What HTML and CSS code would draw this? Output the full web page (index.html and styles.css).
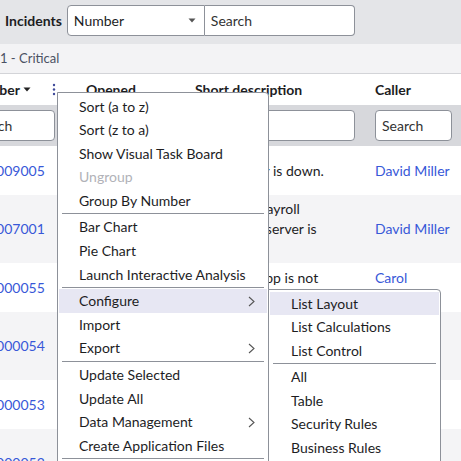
FILE: index.html
```html
<!DOCTYPE html>
<html lang="en">
<head>
<meta charset="utf-8">
<title>Incidents</title>
<link rel="stylesheet" href="styles.css">
</head>
<body>
<div class="page">
  <header class="topbar">
    <span class="title">Incidents</span>
    <div class="searchgroup">
      <div class="select"><span>Number</span><svg class="caret" width="8" height="5" viewBox="0 0 8 5"><path d="M0.5 0.5h7L4 4.5z" fill="#555"/></svg></div>
      <div class="search">Search</div>
    </div>
  </header>
  <div class="group">1 - Critical</div>
  <div class="list">
    <div class="row head">
      <div class="cell c1"><span>Number</span><svg class="sortcaret" width="8" height="5" viewBox="0 0 8 5"><path d="M0.5 0.5h7L4 4.5z" fill="#222"/></svg><svg class="dots" width="4" height="13" viewBox="0 0 4 13"><circle cx="2" cy="2" r="1.2" fill="#3f4a9a"/><circle cx="2" cy="6.5" r="1.2" fill="#3f4a9a"/><circle cx="2" cy="11" r="1.2" fill="#3f4a9a"/></svg></div>
      <div class="cell c2">Opened</div>
      <div class="cell c3">Short description</div>
      <div class="cell c4">Caller</div>
    </div>
    <div class="row filters">
      <div class="cell c1"><div class="input">Search</div></div>
      <div class="cell c2"><div class="input">Search</div></div>
      <div class="cell c3"><div class="input">Search</div></div>
      <div class="cell c4"><div class="input w77">Search</div></div>
    </div>
    <div class="row h2">
      <div class="cell c1 link">INC0009005</div>
      <div class="cell c2">2025-05-14 10:22:31</div>
      <div class="cell c3">Email server is down.</div>
      <div class="cell c4 link">David Miller</div>
    </div>
    <div class="row h3 alt">
      <div class="cell c1 link">INC0007001</div>
      <div class="cell c2">2025-04-30 16:05:12</div>
      <div class="cell c3">Employee payroll application server is down.</div>
      <div class="cell c4 link">David Miller</div>
    </div>
    <div class="row h2">
      <div class="cell c1 link">INC0000055</div>
      <div class="cell c2">2025-03-21 08:47:55</div>
      <div class="cell c3">SAP Sales app is not accessible</div>
      <div class="cell c4 link">Carol Coughlin</div>
    </div>
    <div class="row h3 alt">
      <div class="cell c1 link">INC0000054</div>
      <div class="cell c2">2025-03-18 11:30:09</div>
      <div class="cell c3">SAP Materials Management is slow or there is an outage</div>
      <div class="cell c4 link">Christen Mitchell</div>
    </div>
    <div class="row h2">
      <div class="cell c1 link">INC0000053</div>
      <div class="cell c2">2025-03-16 14:12:40</div>
      <div class="cell c3">The SAP HR application is not accessible</div>
      <div class="cell c4 link">Margaret Grey</div>
    </div>
    <div class="row h3 alt">
      <div class="cell c1 link">INC0000052</div>
      <div class="cell c2">2025-03-15 09:02:17</div>
      <div class="cell c3">SAP General Ledger has outage</div>
      <div class="cell c4 link">Bud Richman</div>
    </div>
  </div>

  <div class="menu">
    <div class="item">Sort (a to z)</div>
    <div class="item">Sort (z to a)</div>
    <div class="item">Show Visual Task Board</div>
    <div class="item disabled">Ungroup</div>
    <div class="item">Group By Number</div>
    <div class="sep"></div>
    <div class="item">Bar Chart</div>
    <div class="item">Pie Chart</div>
    <div class="item">Launch Interactive Analysis</div>
    <div class="sep"></div>
    <div class="item active">Configure<svg class="chev" width="7" height="11" viewBox="0 0 7 11"><path d="M1 1l5 4.5L1 10" fill="none" stroke="#555" stroke-width="1.1"/></svg></div>
    <div class="item">Import</div>
    <div class="item">Export<svg class="chev" width="7" height="11" viewBox="0 0 7 11"><path d="M1 1l5 4.5L1 10" fill="none" stroke="#555" stroke-width="1.1"/></svg></div>
    <div class="sep"></div>
    <div class="item">Update Selected</div>
    <div class="item">Update All</div>
    <div class="item">Data Management<svg class="chev" width="7" height="11" viewBox="0 0 7 11"><path d="M1 1l5 4.5L1 10" fill="none" stroke="#555" stroke-width="1.1"/></svg></div>
    <div class="item">Create Application Files</div>
    <div class="sep"></div>
    <div class="item">Filters</div>
  </div>

  <div class="menu submenu">
    <div class="item active">List Layout</div>
    <div class="item">List Calculations</div>
    <div class="item">List Control</div>
    <div class="sep"></div>
    <div class="item">All</div>
    <div class="item">Table</div>
    <div class="item">Security Rules</div>
    <div class="item">Business Rules</div>
    <div class="item">Client Scripts</div>
  </div>
</div>
</body>
</html>
```

FILE: styles.css
```css
* { box-sizing: border-box; }
html, body { margin: 0; padding: 0; }
body {
  font-family: Lato, "Open Sans", sans-serif;
  font-size: 14px;
  color: #1d1d1f;
  background: #fff;
}
.page {
  position: relative;
  width: 461px;
  height: 461px;
  overflow: hidden;
}
.topbar {
  height: 44px;
  background: #e4e5e8;
  display: flex;
  align-items: flex-start;
  padding: 5px 0 0 5px;
  gap: 5px;
}
.title {
  font-weight: 700;
  font-size: 14px;
  line-height: 31px;
  color: #1d1d1f;
}
.searchgroup { display: flex; }
.select {
  width: 138px;
  height: 31px;
  background: #fff;
  border: 1px solid #8d9199;
  border-radius: 4px 0 0 4px;
  display: flex;
  align-items: center;
  justify-content: space-between;
  padding: 0 8px 0 6px;
  font-size: 14px;
}
.search {
  width: 150px;
  height: 31px;
  background: #fff;
  border: 1px solid #8d9199;
  border-left: none;
  border-radius: 0 4px 4px 0;
  line-height: 29px;
  padding-left: 6px;
  font-size: 14px;
  color: #333;
}
.group {
  height: 30px;
  background: #f3f3f5;
  border-bottom: 1px solid #d3d4d8;
  line-height: 29px;
  color: #4a5163;
  font-size: 13px;
}
.list { margin-left: -42px; width: 520px; }
.row {
  display: grid;
  grid-template-columns: 107px 120px 180px 100px;
  align-items: center;
}
.cell { padding: 0 10px; line-height: 20px; }
.c1 { padding-left: 6px; }
.c2 { padding-left: 21px; }
.head { height: 31px; background: #fff; font-weight: 700; }
.head .c1 { display: flex; align-items: center; padding-left: 11px; }
.sortcaret { margin-left: 3px; }
.dots { margin-left: auto; margin-right: -1px; }
.filters { height: 41px; background: #d7d8dc; }
.input {
  height: 31px;
  background: #fff;
  border: 1px solid #8d9199;
  border-radius: 4px;
  line-height: 29px;
  padding-left: 6px;
  color: #333;
  font-size: 14px;
}
.w77 { width: 77px; }
.h2 { height: 49px; }
.h3 { height: 68px; }
.alt { background: #f4f4f6; }
.link { color: #3858d8; }

.menu {
  position: absolute;
  left: 57px;
  top: 92px;
  width: 212px;
  background: #fff;
  border: 1px solid #8d9199;
  border-radius: 0 4px 0 0;
  padding: 1.5px 1px 1px;
}
.submenu {
  left: 268px;
  top: 289px;
  width: 173px;
}
.item {
  height: 23.6px;
  line-height: 23.6px;
  padding-left: 20px;
  padding-right: 12px;
  display: flex;
  align-items: center;
  justify-content: space-between;
  color: #1d1d1f;
  white-space: nowrap;
}
.submenu .item { padding-left: 21px; }
.item.disabled { color: #b1b2b8; }
.item.active { background: #e7e7f3; }
.sep {
  height: 1px;
  background: #8d9199;
  margin: 1px 3px;
}
```
